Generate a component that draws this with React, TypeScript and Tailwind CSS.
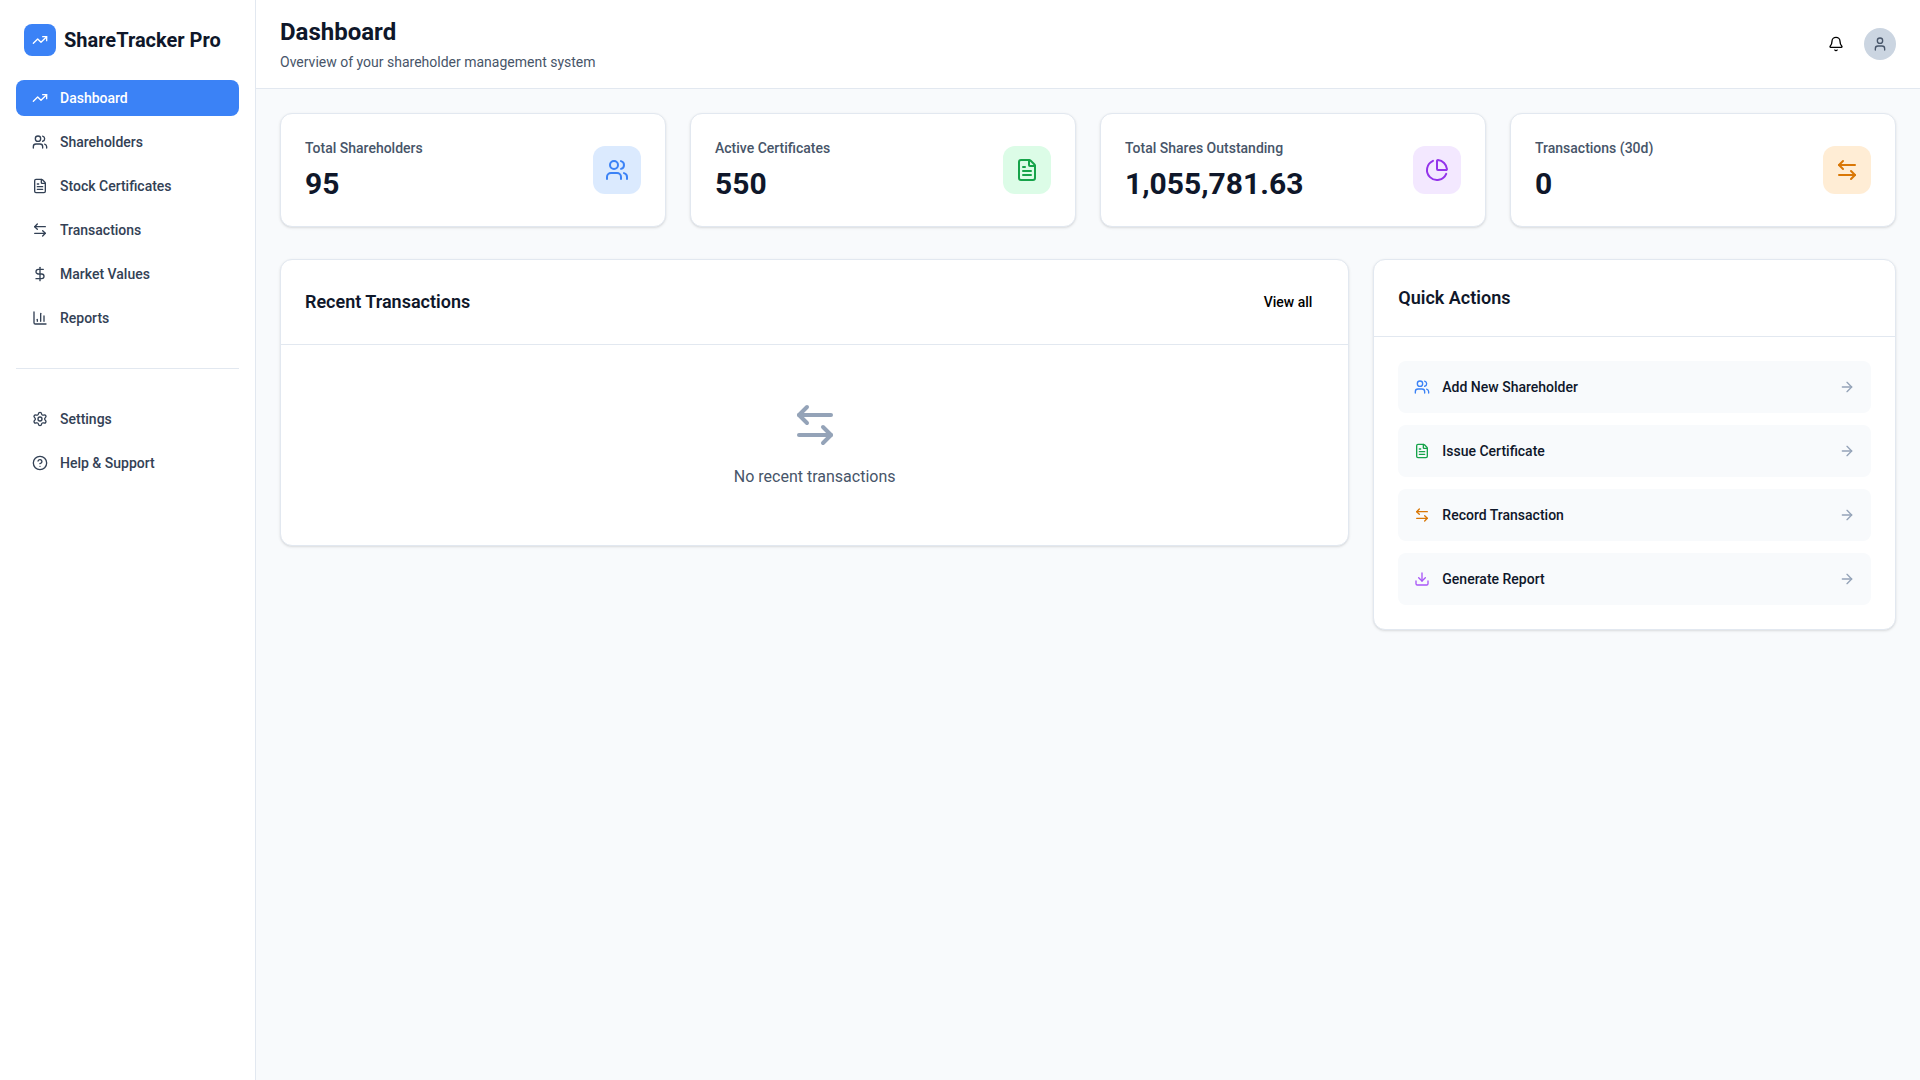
import {
  ArrowLeftRight,
  ArrowRight,
  Bell,
  ChartColumn,
  ChartPie,
  CircleHelp,
  DollarSign,
  Download,
  FileText,
  Settings,
  TrendingUp,
  User,
  Users,
} from "lucide-react";

const NAV = [
  { label: "Dashboard", icon: TrendingUp, active: true },
  { label: "Shareholders", icon: Users },
  { label: "Stock Certificates", icon: FileText },
  { label: "Transactions", icon: ArrowLeftRight },
  { label: "Market Values", icon: DollarSign },
  { label: "Reports", icon: ChartColumn },
];

const NAV_BOTTOM = [
  { label: "Settings", icon: Settings },
  { label: "Help & Support", icon: CircleHelp },
];

const STATS = [
  { label: "Total Shareholders", value: "95", icon: Users, box: "bg-[#dbeafe] text-[#3b82f6]" },
  { label: "Active Certificates", value: "550", icon: FileText, box: "bg-[#dcfce7] text-[#16a34a]" },
  { label: "Total Shares Outstanding", value: "1,055,781.63", icon: ChartPie, box: "bg-[#f3e8ff] text-[#9333ea]" },
  { label: "Transactions (30d)", value: "0", icon: ArrowLeftRight, box: "bg-[#ffedd5] text-[#d97706]" },
];

const ACTIONS = [
  { label: "Add New Shareholder", icon: Users, color: "text-[#3b82f6]" },
  { label: "Issue Certificate", icon: FileText, color: "text-[#16a34a]" },
  { label: "Record Transaction", icon: ArrowLeftRight, color: "text-[#d97706]" },
  { label: "Generate Report", icon: Download, color: "text-[#a855f7]" },
];

function NavItem({ label, icon: Icon, active }: { label: string; icon: typeof Users; active?: boolean }) {
  return (
    <a
      href="#"
      className={`flex h-9 items-center gap-3 rounded-lg px-4 text-sm font-medium ${
        active ? "bg-[#3b82f6] text-white" : "text-[#334155]"
      }`}
    >
      <Icon className="h-4 w-4" />
      {label}
    </a>
  );
}

function Sidebar() {
  return (
    <aside className="flex w-64 shrink-0 flex-col border-r border-[#e2e8f0] bg-white">
      <div className="flex items-center gap-2 px-6 pt-6">
        <div className="flex h-8 w-8 items-center justify-center rounded-lg bg-[#3b82f6] text-white">
          <TrendingUp className="h-4 w-4" />
        </div>
        <span className="text-xl font-bold text-[#0f172a]">ShareTracker Pro</span>
      </div>
      <nav className="mt-6 flex flex-col gap-2 px-4">
        {NAV.map((n) => (
          <NavItem key={n.label} {...n} />
        ))}
      </nav>
      <div className="mx-4 mt-8 border-t border-[#e2e8f0]" />
      <nav className="mt-8 flex flex-col gap-2 px-4">
        {NAV_BOTTOM.map((n) => (
          <NavItem key={n.label} {...n} />
        ))}
      </nav>
    </aside>
  );
}

function Header() {
  return (
    <header className="flex items-center justify-between border-b border-[#e2e8f0] bg-white px-6 py-4">
      <div>
        <h1 className="text-2xl font-bold text-[#0f172a]">Dashboard</h1>
        <p className="mt-1 text-sm text-[#475569]">Overview of your shareholder management system</p>
      </div>
      <div className="flex items-center gap-3">
        <button type="button" className="flex h-8 w-8 items-center justify-center text-black">
          <Bell className="h-4 w-4" />
        </button>
        <div className="flex h-8 w-8 items-center justify-center rounded-full bg-[#cbd5e1] text-[#475569]">
          <User className="h-4 w-4" />
        </div>
      </div>
    </header>
  );
}

export default function App() {
  return (
    <div className="flex h-screen bg-[#f8fafc] [font-family:Roboto,sans-serif]">
      <Sidebar />
      <div className="flex min-w-0 flex-1 flex-col">
        <Header />
        <main className="flex-1 p-6">
          <div className="grid grid-cols-4 gap-6">
            {STATS.map((s) => (
              <div
                key={s.label}
                className="flex items-center justify-between rounded-xl border border-[#e2e8f0] bg-white p-6 shadow-sm"
              >
                <div>
                  <p className="text-sm font-medium text-[#475569]">{s.label}</p>
                  <p className="mt-2 text-3xl font-bold text-[#0f172a]">{s.value}</p>
                </div>
                <div className={`flex h-12 w-12 items-center justify-center rounded-xl ${s.box}`}>
                  <s.icon className="h-6 w-6" />
                </div>
              </div>
            ))}
          </div>

          <div className="mt-8 grid grid-cols-3 items-start gap-6">
            <section className="col-span-2 rounded-xl border border-[#e2e8f0] bg-white shadow-sm">
              <div className="flex items-center justify-between border-b border-[#e2e8f0] p-6">
                <h2 className="text-lg font-semibold text-[#0f172a]">Recent Transactions</h2>
                <button type="button" className="h-9 px-3 text-sm font-medium text-black">
                  View all
                </button>
              </div>
              <div className="flex flex-col items-center py-14">
                <ArrowLeftRight className="h-12 w-12 text-[#94a3b8]" />
                <p className="mt-4 text-[#475569]">No recent transactions</p>
              </div>
            </section>

            <section className="rounded-xl border border-[#e2e8f0] bg-white shadow-sm">
              <div className="border-b border-[#e2e8f0] p-6">
                <h2 className="text-lg font-semibold text-[#0f172a]">Quick Actions</h2>
              </div>
              <div className="flex flex-col gap-3 p-6">
                {ACTIONS.map((a) => (
                  <a key={a.label} href="#" className="flex items-center justify-between rounded-lg bg-[#f8fafc] p-4">
                    <span className="flex items-center gap-3 text-sm font-medium text-[#0f172a]">
                      <a.icon className={`h-4 w-4 ${a.color}`} />
                      {a.label}
                    </span>
                    <ArrowRight className="h-4 w-4 text-[#94a3b8]" />
                  </a>
                ))}
              </div>
            </section>
          </div>
        </main>
      </div>
    </div>
  );
}
